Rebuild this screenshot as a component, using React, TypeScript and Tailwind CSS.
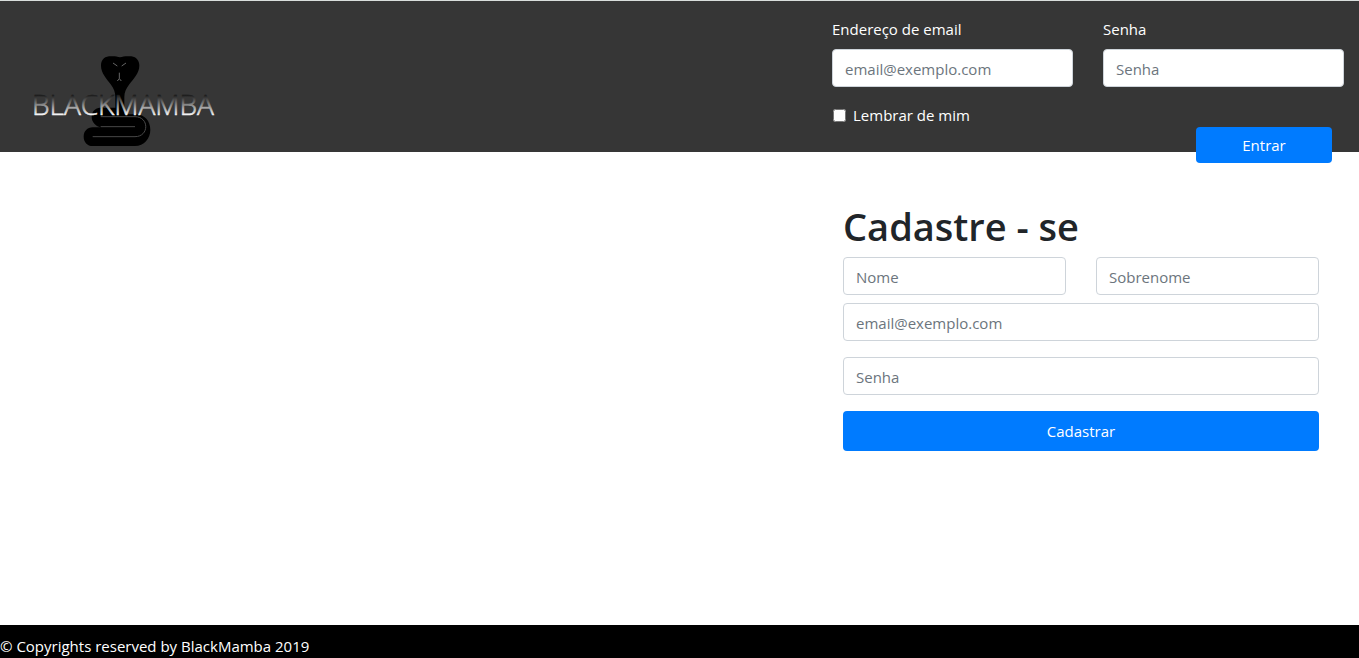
import type { InputHTMLAttributes } from "react";

function Field({ className = "", ...props }: InputHTMLAttributes<HTMLInputElement>) {
  return (
    <input
      {...props}
      className={`block h-[38px] w-full min-w-0 rounded border border-[#ced4da] bg-white px-3 pt-0.5 text-[15px] text-[#495057] placeholder:text-[#6c757d] ${className}`}
    />
  );
}

function Logo() {
  return (
    <svg viewBox="0 0 630 321" className="h-[107px] w-[210px]" role="img" aria-label="BlackMamba">
      <defs>
        <linearGradient id="fade" gradientUnits="userSpaceOnUse" x1="0" y1="148" x2="0" y2="212">
          <stop offset="0" stopColor="#111" />
          <stop offset="0.45" stopColor="#808080" />
          <stop offset="1" stopColor="#fff" />
        </linearGradient>
      </defs>
      <path d="M300 37C290 33 278 33 267 34C250 36 243 48 243 62C243 84 260 101 272 118C282 132 286 142 286 156V188H238C224 190 215 201 215 215C215 231 226 243 242 247H218C202 247 191 259 191 275C191 291 202 303 218 303H345C372 303 391 280 391 254C391 229 374 208 348 208H313V156C313 142 318 132 328 118C340 101 358 84 358 62C358 48 350 36 334 34C323 33 310 33 300 37Z" fill="#000" />
      <path d="M242 245H345M242 215H345C388 215 388 275 345 275H218" fill="none" stroke="#484848" strokeWidth="3" />
      <path d="M279 54L292 63M318 54L305 63M298 83V101L292 108M298 101L304 108" fill="none" stroke="#666" strokeWidth="3" />
      <text x="36" y="211" fontSize="84" fontWeight="300" fill="url(#fade)" stroke="url(#fade)" strokeWidth="2" className="font-['Open_Sans',sans-serif]">BLACKMAMBA</text>
    </svg>
  );
}

export default function App() {
  return (
    <div className="flex min-h-screen flex-col bg-white font-['Open_Sans','Noto_Sans',sans-serif] text-[15px] leading-6 text-[#212529]">
      <header className="flex items-start justify-between border-t border-[#d9dedc] bg-[#363636] px-[15px] text-white">
        <a href="#" className="ml-[5px] mt-11 block">
          <Logo />
        </a>
        <form className="grid w-lg grid-cols-2 gap-x-[30px] pt-4">
          <div>
            <label htmlFor="login-email" className="mb-2 block">Endereço de email</label>
            <Field id="login-email" type="email" placeholder="email@exemplo.com" />
            <div className="mt-4 flex items-center gap-[7px] pl-px">
              <input id="remember" type="checkbox" className="size-[13px]" />
              <label htmlFor="remember">Lembrar de mim</label>
            </div>
          </div>
          <div className="flex flex-col">
            <label htmlFor="login-password" className="mb-2 block">Senha</label>
            <Field id="login-password" type="password" placeholder="Senha" />
            <button type="submit" className="-mb-[11px] mr-3 mt-10 h-9 w-34 self-end rounded bg-[#007bff] text-white">Entrar</button>
          </div>
        </form>
      </header>

      <main className="flex flex-1 justify-end px-10 pt-[50px]">
        <form className="w-[476px]">
          <h1 className="mb-[7px] text-[38px] font-semibold leading-[48px]">Cadastre - se</h1>
          <div className="mb-2 grid grid-cols-2 gap-[30px]">
            <Field aria-label="Nome" placeholder="Nome" />
            <Field aria-label="Sobrenome" placeholder="Sobrenome" />
          </div>
          <Field aria-label="Email" type="email" placeholder="email@exemplo.com" className="mb-4" />
          <Field aria-label="Senha" type="password" placeholder="Senha" className="mb-4" />
          <button type="submit" className="h-10 w-full rounded bg-[#007bff] text-white">Cadastrar</button>
        </form>
      </main>

      <footer className="bg-black pt-[9px] text-white">© Copyrights reserved by BlackMamba 2019</footer>
    </div>
  );
}
